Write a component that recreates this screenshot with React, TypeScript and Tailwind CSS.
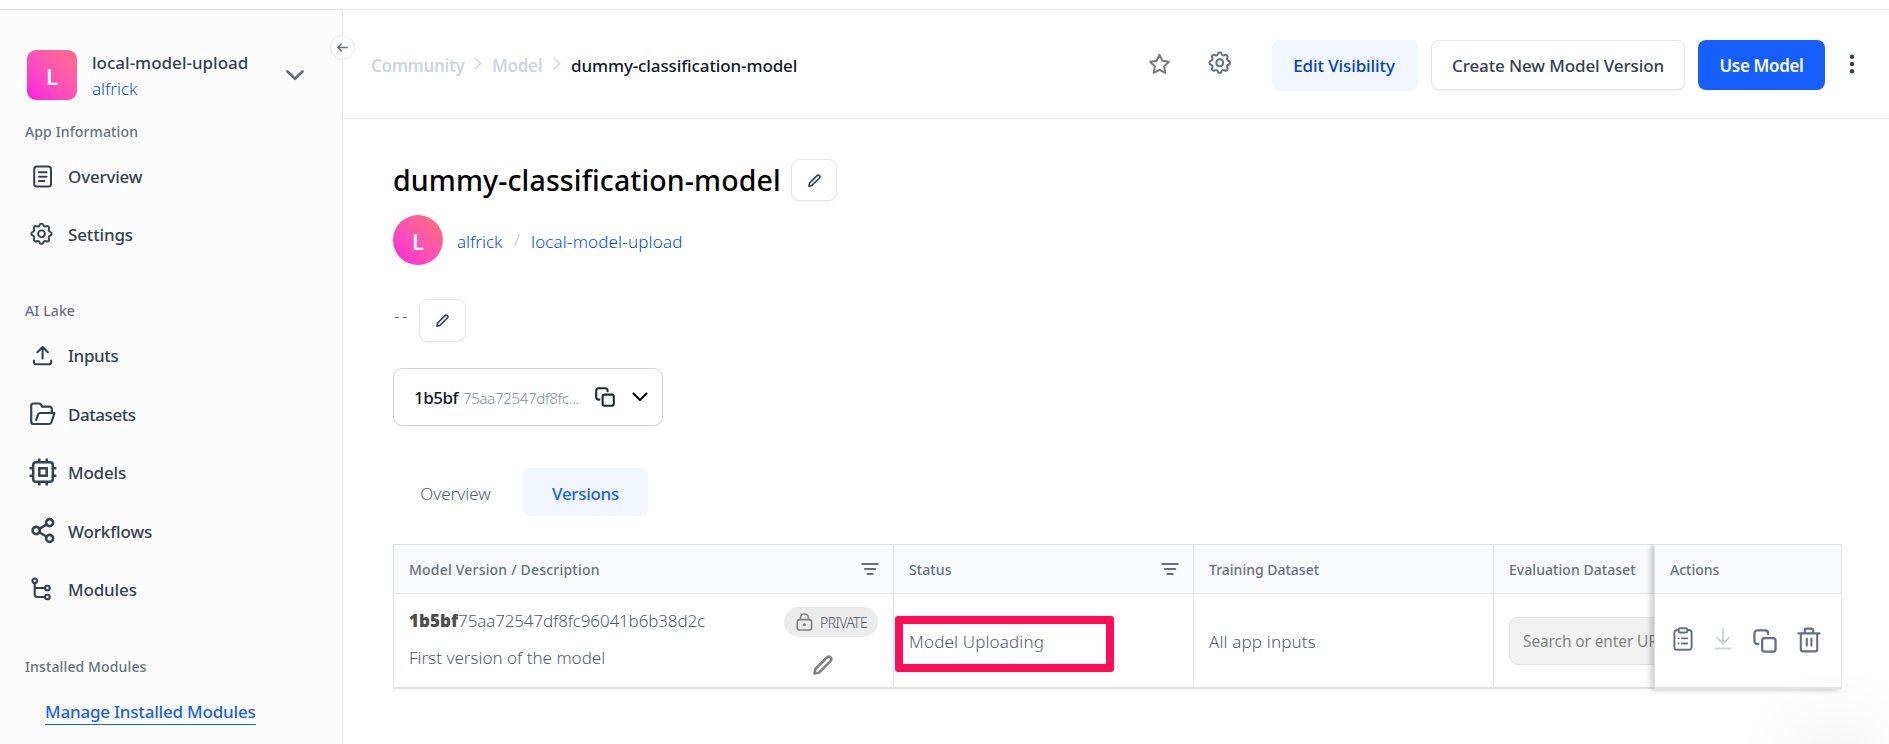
import type { ReactNode } from "react";

type IconProps = { className?: string };

const stroke = {
  fill: "none",
  stroke: "currentColor",
  strokeLinecap: "round" as const,
  strokeLinejoin: "round" as const,
};

function DocIcon() {
  return (
    <svg width="27" height="27" viewBox="0 0 27 27" {...stroke} strokeWidth="2">
      <rect x="5.2" y="3.4" width="16.8" height="20.2" rx="2.6" />
      <path d="M10 9.3h7.6M10 13.7h7.6M10 18.1h5.4" />
    </svg>
  );
}

function GearIcon({ className }: IconProps) {
  return (
    <svg width="27.5" height="27.5" viewBox="0 0 24 24" {...stroke} strokeWidth="1.75" className={className}>
      <path d="M10.325 4.317c.426 -1.756 2.924 -1.756 3.35 0a1.724 1.724 0 0 0 2.573 1.066c1.543 -.94 3.31 .826 2.37 2.37a1.724 1.724 0 0 0 1.065 2.572c1.756 .426 1.756 2.924 0 3.35a1.724 1.724 0 0 0 -1.066 2.573c.94 1.543 -.826 3.31 -2.37 2.37a1.724 1.724 0 0 0 -2.572 1.065c-.426 1.756 -2.924 1.756 -3.35 0a1.724 1.724 0 0 0 -2.573 -1.066c-1.543 .94 -3.31 -.826 -2.37 -2.37a1.724 1.724 0 0 0 -1.065 -2.572c-1.756 -.426 -1.756 -2.924 0 -3.35a1.724 1.724 0 0 0 1.066 -2.573c-.94 -1.543 .826 -3.31 2.37 -2.37c1 .608 2.296 .07 2.572 -1.065z" />
      <circle cx="12" cy="12" r="3" />
    </svg>
  );
}

function UploadIcon() {
  return (
    <svg width="27" height="27" viewBox="0 0 27 27" {...stroke} strokeWidth="2.1">
      <path d="M13.6 16.5V5.5M8.4 10.2l5.2-5.2 5.2 5.2M5 18.6v1.6a2 2 0 0 0 2 2h13.2a2 2 0 0 0 2-2v-1.6" />
    </svg>
  );
}

function FolderIcon() {
  return (
    <svg width="27" height="27" viewBox="0 0 27 27" {...stroke} strokeWidth="2.2">
      <path d="M22.8 12V9a2.4 2.4 0 0 0-2.4-2.4h-7.2l-1.4-2.2a2 2 0 0 0-1.7-.9H4.4a2.2 2.2 0 0 0-2.2 2.2v16.2A2.2 2.2 0 0 0 4.4 24h15.8a2.4 2.4 0 0 0 2.3-1.7L25.4 13H11.3a2.4 2.4 0 0 0-2.3 1.7L7.2 20" />
    </svg>
  );
}

function ChipIcon() {
  return (
    <svg width="28" height="28" viewBox="0 0 28 28" {...stroke} strokeWidth="2.5" className="shrink-0">
      <rect x="4.2" y="4.2" width="19.6" height="19.6" rx="2.8" />
      <rect x="10.3" y="10.3" width="7.4" height="7.4" strokeLinejoin="miter" />
      <path strokeLinecap="butt" d="M10.3 .6v3M17.7 .6v3M10.3 24.4v3M17.7 24.4v3M.6 10.3h3M.6 17.7h3M24.4 10.3h3M24.4 17.7h3" />
    </svg>
  );
}

function ShareIcon() {
  return (
    <svg width="27" height="27" viewBox="0 0 27 27" {...stroke} strokeWidth="2.6">
      <circle cx="7.2" cy="13.5" r="3.6" />
      <circle cx="20.6" cy="5.6" r="3.5" />
      <circle cx="20.6" cy="21.4" r="3.5" />
      <path d="M10.6 11.6l6.8-4M10.6 15.5l6.8 4" />
    </svg>
  );
}

function BranchIcon() {
  return (
    <svg width="27" height="27" viewBox="0 0 27 27" {...stroke} strokeWidth="2.1">
      <circle cx="5.7" cy="4.8" r="2.3" />
      <circle cx="18.4" cy="12" r="2.3" />
      <circle cx="18.4" cy="21" r="2.3" />
      <path d="M5.7 7.4V18.6a2.4 2.4 0 0 0 2.4 2.4h7.6M5.7 12h10" />
    </svg>
  );
}

function PencilIcon({ className, weight = 2 }: IconProps & { weight?: number }) {
  return (
    <svg viewBox="0 0 20 20" {...stroke} strokeWidth={weight} className={className}>
      <path d="M1.4 18.6l1-4.6L13.9 2.5a2.5 2.5 0 0 1 3.6 3.6L6 17.6z" />
    </svg>
  );
}

function CopyIcon({ className, weight }: IconProps & { weight: number }) {
  return (
    <svg viewBox="0 0 20 20" {...stroke} strokeWidth={weight} className={className}>
      <rect x="7.6" y="7.6" width="11.2" height="11.2" rx="2.2" />
      <path d="M4.4 12.6h-.8a2.4 2.4 0 0 1-2.4-2.4V3.6a2.4 2.4 0 0 1 2.4-2.4h6.6a2.4 2.4 0 0 1 2.4 2.4v.6" />
    </svg>
  );
}

function ClipboardIcon() {
  return (
    <svg width="20" height="24" viewBox="0 0 20 24" {...stroke} strokeWidth="2">
      <path d="M5.2 3H4a2.6 2.6 0 0 0-2.6 2.6v14.6A2.6 2.6 0 0 0 4 22.8h12a2.6 2.6 0 0 0 2.6-2.6V5.6A2.6 2.6 0 0 0 16 3h-1.2" />
      <rect x="5.6" y="1.2" width="8.8" height="4.2" rx="1.4" />
      <path strokeWidth="1.8" d="M5.6 11.3h.1M8.9 11.3h5.4M5.6 16.5h.1M8.9 16.5h5.4" />
    </svg>
  );
}

function DownloadIcon() {
  return (
    <svg width="16" height="22" viewBox="0 0 16 22" {...stroke} strokeWidth="2">
      <path d="M8 1v14.4M2 9.6l6 6 6-6M1 20.6h14" />
    </svg>
  );
}

function TrashIcon() {
  return (
    <svg width="24" height="26" viewBox="0 0 24 26" {...stroke} strokeWidth="2.1">
      <path d="M1.4 6.4h21.2M3.8 6.4v15.8a2.2 2.2 0 0 0 2.2 2.2h12a2.2 2.2 0 0 0 2.2-2.2V6.4M7.8 6V3.4A1.8 1.8 0 0 1 9.6 1.6h4.8a1.8 1.8 0 0 1 1.8 1.8V6M9.8 11.6v7M14.4 11.6v7" />
    </svg>
  );
}

function FilterIcon() {
  return (
    <svg width="18" height="14" viewBox="0 0 18 14" {...stroke} strokeWidth="2">
      <path d="M1.2 2h15.6M4 7h10.2M6.5 12h5.2" />
    </svg>
  );
}

function LockIcon() {
  return (
    <svg width="17" height="18" viewBox="0 0 17 18" {...stroke} strokeWidth="1.6">
      <rect x="1.2" y="6.6" width="14.4" height="10.4" rx="2.6" />
      <path d="M4.4 6.4V5a4 4 0 0 1 8 0v1.4" />
      <circle cx="8.4" cy="11.7" r="1.5" fill="currentColor" stroke="none" />
    </svg>
  );
}

function NavItem({ icon, label, className }: { icon: ReactNode; label: string; className: string }) {
  return (
    <a className="flex h-[58.5px] items-center gap-3 pl-[29px] text-[17px] font-medium text-[#344054]">
      <span className="flex w-[27px] shrink-0 items-center justify-center">{icon}</span>
      <span className={className}>{label}</span>
    </a>
  );
}

function NavHeading({ children }: { children: ReactNode }) {
  return (
    <h2 className="mb-[5px] pl-[25px] text-[14px] leading-5 font-medium tracking-[0.13px] text-[#667085]">{children}</h2>
  );
}

function Sidebar() {
  return (
    <aside className="relative w-[343px] shrink-0 border-r border-[#e4e7ec] bg-[#fcfcfc] pt-10">
      <div className="flex h-[50px] items-center pl-[27px]">
        <div className="flex size-[50px] items-center justify-center rounded-[9px] bg-linear-to-tr from-[#fb0ce0] to-[#ff6f85] pt-0.5 text-[22px] font-semibold text-white">
          L
        </div>
        <div className="ml-[15px] w-[179px] pt-[2px] text-[17px] leading-[26px]">
          <div className="font-medium text-[#344054]">local-model-upload</div>
          <div className="font-light text-[#004eff]">alfrick</div>
        </div>
        <svg width="18" height="11" viewBox="0 0 18 11" {...stroke} strokeWidth="2.7" className="ml-[15px] text-[#667085]">
          <path d="M1.5 1.5L9 8.8l7.5-7.3" />
        </svg>
      </div>
      <nav className="pt-[22px]">
        <NavHeading>App Information</NavHeading>
        <NavItem icon={<DocIcon />} label="Overview" className="tracking-[-0.2px]" />
        <NavItem icon={<GearIcon className="-translate-x-px -translate-y-px" />} label="Settings" className="tracking-[-0.15px]" />
        <div className="h-[37px]" />
        <NavHeading>AI Lake</NavHeading>
        <NavItem icon={<UploadIcon />} label="Inputs" className="pt-px tracking-[-0.4px]" />
        <NavItem icon={<FolderIcon />} label="Datasets" className="pt-px tracking-[-0.45px]" />
        <NavItem icon={<ChipIcon />} label="Models" className="pt-px tracking-[-0.2px]" />
        <NavItem icon={<ShareIcon />} label="Workflows" className="pt-px tracking-[-0.15px]" />
        <NavItem icon={<BranchIcon />} label="Modules" className="pt-px tracking-[-0.15px]" />
        <div className="h-[38px]" />
        <NavHeading>Installed Modules</NavHeading>
        <a className="mt-[17px] ml-[45px] inline-block border-b border-[#155eff] text-[17px] leading-[25px] font-medium tracking-[-0.2px] text-[#155eff]">
          Manage Installed Modules
        </a>
      </nav>
      <button className="absolute top-[25px] -right-[13px] flex size-[25px] items-center justify-center rounded-full border border-[#e4e7ec] bg-white text-[#667085]">
        <svg width="11" height="9" viewBox="0 0 11 9" {...stroke} strokeWidth="1.5">
          <path d="M10.2 4.5H1M4.3 1L.9 4.5l3.4 3.5" />
        </svg>
      </button>
    </aside>
  );
}

function Crumb() {
  return (
    <svg width="8" height="13" viewBox="0 0 8 13" {...stroke} strokeWidth="1.6" className="-mt-[3px] text-[#d0d5dd]">
      <path d="M1.2 1.2l5.4 5.3-5.4 5.3" />
    </svg>
  );
}

function TopBar() {
  return (
    <header className="flex h-[109px] items-center border-b border-[#e4e7ec] pt-[2px] pl-7 text-[17px] font-medium">
      <span className="w-[94px] pt-[2px] font-semibold tracking-[-0.35px] text-[#d0d5dd]">Community</span>
      <span className="ml-[9px]">
        <Crumb />
      </span>
      <span className="ml-[10px] w-[51px] pt-[2px] font-semibold tracking-[-0.3px] text-[#d0d5dd]">Model</span>
      <span className="ml-[10px]">
        <Crumb />
      </span>
      <span className="ml-[10px] pt-[2px] tracking-[-0.12px] text-[#101828]">dummy-classification-model</span>
      <div className="ml-auto flex items-center pr-[34px]">
        <svg width="23" height="22" viewBox="0 0 23 22" {...stroke} strokeWidth="2" className="-mt-[3px] text-[#7a7a7a]">
          <path d="M11.5 1.8l2.9 6 6.5.9-4.7 4.6 1.1 6.6-5.8-3.1-5.8 3.1 1.1-6.6L2.1 8.7l6.5-.9z" />
        </svg>
        <GearIcon className="-mt-[5px] ml-[35px] text-[#667085]" />
        <button className="ml-[39px] h-[50px] w-[146px] rounded-lg bg-[#f2f6ff] pt-px pr-[2px] text-center tracking-[-0.1px] text-[#0040d6] shadow-[0_1px_2px_rgba(16,24,40,0.05)]">
          Edit Visibility
        </button>
        <button className="ml-[13px] h-[50px] w-[254px] rounded-lg border border-[#e4e7ec] bg-white pt-px text-center tracking-[-0.12px] text-[#344054] shadow-[0_1px_2px_rgba(16,24,40,0.05)]">
          Create New Model Version
        </button>
        <button className="ml-[13px] h-[50px] w-[127px] rounded-lg bg-[#155eff] pt-px text-center font-semibold tracking-[-0.35px] text-white">
          Use Model
        </button>
        <svg width="6" height="20" viewBox="0 0 6 20" className="-mt-[3px] ml-[24px] fill-[#344054]">
          <circle cx="3" cy="2.7" r="2.2" />
          <circle cx="3" cy="10" r="2.2" />
          <circle cx="3" cy="17.3" r="2.2" />
        </svg>
      </div>
    </header>
  );
}

function EditButton({ className }: IconProps) {
  return (
    <button
      className={`flex items-center justify-center rounded-[9px] border border-[#e4e7ec] bg-white text-[#344054] shadow-[0_1px_2px_rgba(16,24,40,0.05)] ${className}`}
    >
      <PencilIcon className="size-[13px]" weight={2.5} />
    </button>
  );
}

function ModelHeader() {
  return (
    <section>
      <div className="flex h-[42px] items-center">
        <h1 className="w-[398px] text-[28.5px] font-medium tracking-[0.13px] whitespace-nowrap text-black">
          dummy-classification-model
        </h1>
        <EditButton className="h-[42px] w-[46px]" />
      </div>
      <div className="mt-[14px] flex h-[50px] items-center text-[17px] font-light text-[#004eff]">
        <div className="flex size-[50px] items-center justify-center rounded-full bg-linear-to-tr from-[#fb0ce0] to-[#ff6f75] pt-0.5 text-[22px] font-semibold text-white">
          L
        </div>
        <span className="ml-[14px] w-[47px] pt-[3px]">alfrick</span>
        <span className="w-[27px] pl-[10px] text-[#b8bfca]">/</span>
        <span className="pt-[3px] tracking-[0.17px]">local-model-upload</span>
      </div>
      <div className="mt-[34px] flex h-[43px]">
        <span className="w-[26px] pl-px text-[17px] leading-[33px] font-light tracking-[2.5px] text-[#475467]">--</span>
        <EditButton className="h-[43px] w-[47px]" />
      </div>
      <button className="mt-[26px] flex h-[58px] w-[270px] items-center rounded-[9px] border border-[#d0d5dd] bg-white pl-5 shadow-[0_1px_2px_rgba(16,24,40,0.05)]">
        <span className="w-[49px] pt-[2px] text-left text-[17px] font-medium tracking-[-0.5px] text-[#101828]">1b5bf</span>
        <span className="w-[132px] pt-[2px] text-left text-[15px] font-light tracking-[-0.3px] text-[#838ea1]">75aa72547df8fc...</span>
        <CopyIcon className="size-[20px] text-[#1d2939]" weight={2.1} />
        <svg width="16" height="10" viewBox="0 0 16 10" {...stroke} strokeWidth="2" className="ml-[17px] text-black">
          <path d="M1.5 1.5L8 8l6.5-6.5" />
        </svg>
      </button>
    </section>
  );
}

function Tabs() {
  return (
    <div className="mt-[42px] flex gap-[5px] text-[17px]">
      <button className="h-12 w-[125px] pt-[3px] font-light text-[#4f5b70]">Overview</button>
      <button className="h-12 w-[125px] rounded-md bg-[#f2f6ff] pt-[3px] font-medium tracking-[-0.3px] text-[#155eff]">
        Versions
      </button>
    </div>
  );
}

function HeadCell({ label, filter, className }: { label: string; filter?: boolean; className: string }) {
  return (
    <div
      className={`flex h-[50px] w-full shrink-0 items-center justify-between border-y border-l border-[#e0e4e9] bg-[#f9fafc] pr-[14px] pl-[15px] text-[14px] font-medium whitespace-nowrap text-[#667085] ${className}`}
    >
      <span>{label}</span>
      {filter && <FilterIcon />}
    </div>
  );
}

function BodyCell({ children, className }: { children: ReactNode; className: string }) {
  return (
    <div
      className={`flex h-[95px] w-full shrink-0 items-center border-b-2 border-l border-[#e0e4e9] bg-white text-[17px] font-light text-[#4f5b70] ${className}`}
    >
      {children}
    </div>
  );
}

function VersionsTable() {
  return (
    <div className="mt-7 flex w-[1449px]">
      <div className="w-[500px]">
        <HeadCell label="Model Version / Description" filter className="tracking-[0.2px]" />
        <BodyCell className="justify-between pr-[15px] pl-[15px]">
          <div className="pb-[3px]">
            <div className="h-[37px] leading-[24px] tracking-[-0.14px]">
              <b className="font-black tracking-[0.05px] text-[#4d4d4d]">1b5bf</b>75aa72547df8fc96041b6b38d2c
            </div>
            <div className="leading-[24px]">First version of the model</div>
          </div>
          <div className="flex flex-col items-center">
            <div className="flex h-[30px] w-[94px] items-center gap-[7px] rounded-full bg-[#ececec] pl-3 text-[14px]">
              <span className="text-[#808080]">
                <LockIcon />
              </span>
              <span className="pt-[2px] tracking-[-0.6px]">PRIVATE</span>
            </div>
            <PencilIcon className="mt-[18px] mr-[16px] size-[20px] text-[#808080]" weight={2.5} />
          </div>
        </BodyCell>
      </div>
      <div className="w-[300px]">
        <HeadCell label="Status" filter className="tracking-[0.1px]" />
        <BodyCell className="relative pl-[15px]">
          <span className="pt-[2px] tracking-[0.15px]">Model Uploading</span>
          <div className="absolute top-[22px] left-[1px] h-[56px] w-[219px] rounded-[3px] border-8 border-[#ff0d5b]" />
        </BodyCell>
      </div>
      <div className="w-[300px]">
        <HeadCell label="Training Dataset" className="tracking-normal" />
        <BodyCell className="pl-[15px]">
          <span className="pt-[2px] tracking-[0.15px]">All app inputs</span>
        </BodyCell>
      </div>
      <div className="w-[161px] shrink-0">
        <HeadCell label="Evaluation Dataset" className="tracking-[0.05px]" />
        <BodyCell className="overflow-hidden pl-[15px]">
          <div className="flex h-12 w-[240px] shrink-0 items-center rounded-[9px] border border-[#e4e4e4] bg-[#f1f1f1] pt-[3px] pl-[13px] text-[15.5px] font-normal tracking-[-0.12px] whitespace-nowrap text-[#858585]">
            Search or enter URL
          </div>
        </BodyCell>
      </div>
      <div className="relative w-[188px] shrink-0 border-r border-[#e0e4e9] shadow-[-3px_1px_6px_rgba(0,0,0,0.22)] [clip-path:inset(0_0_-6px_-12px)]">
        <HeadCell label="Actions" className="tracking-normal" />
        <BodyCell className="pl-[18px]">
          <span className="-mt-[3px] text-[#667085]">
            <ClipboardIcon />
          </span>
          <span className="-mt-[3px] ml-[22px] text-[#d0d5dd]">
            <DownloadIcon />
          </span>
          <CopyIcon className="ml-[22px] size-[24px] text-[#667085]" weight={1.9} />
          <span className="-mt-[2px] ml-5 text-[#667085]">
            <TrashIcon />
          </span>
        </BodyCell>
      </div>
    </div>
  );
}

export default function App() {
  return (
    <div className="relative flex h-[744px] w-[1889px] flex-col overflow-hidden bg-white font-['Noto_Sans',sans-serif]">
      <div className="h-[10px] shrink-0 border-b border-[#e4e7ec] bg-white" />
      <div className="flex min-h-0 flex-1">
        <Sidebar />
        <div className="min-w-0 flex-1">
          <TopBar />
          <main className="pt-10 pl-[50px]">
            <ModelHeader />
            <Tabs />
            <VersionsTable />
          </main>
        </div>
      </div>
      <div className="pointer-events-none absolute right-0 bottom-0 h-[70px] w-[160px] bg-[radial-gradient(circle_at_106px_88px,rgba(0,0,0,0.045),rgba(0,0,0,0.012)_60px,transparent_98px)]" />
    </div>
  );
}
